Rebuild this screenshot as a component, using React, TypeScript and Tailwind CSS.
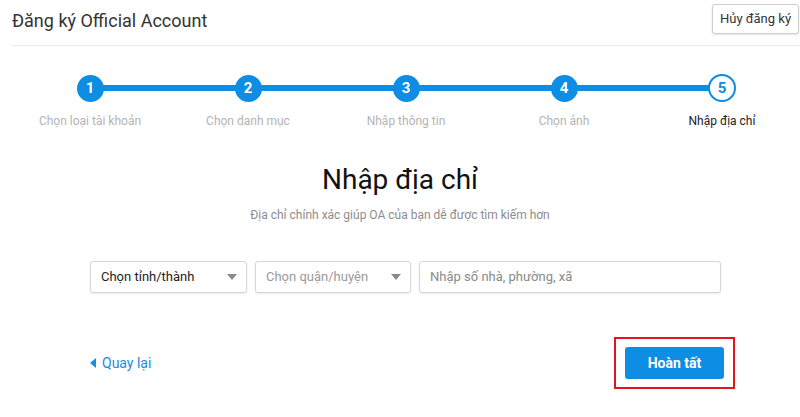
import React from "react";

const steps = [
  "Chọn loại tài khoản",
  "Chọn danh mục",
  "Nhập thông tin",
  "Chọn ảnh",
  "Nhập địa chỉ",
];

function Caret() {
  return (
    <svg width="10" height="6" viewBox="0 0 10 6" className="shrink-0">
      <path d="M0 0 L10 0 L5 6 Z" fill="#8a8a8a" />
    </svg>
  );
}

export default function App() {
  return (
    <div
      className="w-[800px] h-[417px] bg-white overflow-hidden text-[#333]"
      style={{ fontFamily: "Roboto, 'Noto Sans', sans-serif" }}
    >
      {/* Header */}
      <div className="ml-[12px] h-[46px] border-b border-[#e8eaee] flex items-center justify-between">
        <div className="text-[18px] text-[#333] -mt-[4px]">Đăng ký Official Account</div>
        <button className="h-[30px] w-[87px] mr-[1px] -mt-[8px] border border-[#cfcfcf] rounded-[3px] bg-white text-[13px] font-normal text-[#333] shadow-[0_1px_2px_rgba(0,0,0,0.12)]">
          Hủy đăng ký
        </button>
      </div>

      {/* Stepper */}
      <div className="ml-[11px] mt-[28px] w-[790px] grid grid-cols-5">
        {steps.map((s, i) => {
          const last = i === steps.length - 1;
          return (
            <div key={s} className="flex flex-col items-center">
              <div className="relative w-full h-[28px] flex items-center justify-center">
                {i > 0 && (
                  <div className="absolute left-0 right-1/2 top-[11px] h-[6px] bg-[#0d8de3]" />
                )}
                {!last && (
                  <div className="absolute left-1/2 right-0 top-[11px] h-[6px] bg-[#0d8de3]" />
                )}
                {last ? (
                  <div className="relative z-10 w-[28px] h-[28px] rounded-full bg-white border-[2px] border-[#0d8de3] text-[#0d8de3] flex items-center justify-center text-[15px] font-bold">
                    5
                  </div>
                ) : (
                  <div className="relative z-10 w-[27px] h-[27px] rounded-full bg-[#0d8de3] text-white flex items-center justify-center text-[15px] font-bold">
                    {i + 1}
                  </div>
                )}
              </div>
              <div
                className={`mt-[12px] text-[12px] leading-[14px] ${
                  last ? "text-[#222]" : "text-[#b4b4b4]"
                }`}
              >
                {s}
              </div>
            </div>
          );
        })}
      </div>

      {/* Title */}
      <div className="mt-[36px] text-center text-[28px] leading-[32px] text-[#111]">
        Nhập địa chỉ
      </div>
      <div className="mt-[12px] text-center text-[12px] leading-[14px] text-[#8c8c8c]">
        Địa chỉ chính xác giúp OA của bạn dễ được tìm kiếm hơn
      </div>

      {/* Inputs */}
      <div className="mt-[39px] ml-[90px] flex gap-[8px]">
        <div className="w-[157px] h-[32px] border border-[#d6d6d6] rounded-[3px] flex items-center justify-between pl-[10px] pr-[9px] shadow-[0_1px_2px_rgba(0,0,0,0.08)]">
          <span className="text-[13px] text-[#222]">Chọn tỉnh/thành</span>
          <Caret />
        </div>
        <div className="w-[156px] h-[32px] border border-[#d6d6d6] rounded-[3px] flex items-center justify-between pl-[10px] pr-[9px] shadow-[0_1px_2px_rgba(0,0,0,0.08)]">
          <span className="text-[13px] text-[#9a9a9a]">Chọn quận/huyện</span>
          <Caret />
        </div>
        <div className="w-[302px] h-[32px] border border-[#d6d6d6] rounded-[3px] flex items-center pl-[10px] shadow-[0_1px_2px_rgba(0,0,0,0.08)]">
          <span className="text-[13px] text-[#8a8a8a]">Nhập số nhà, phường, xã</span>
        </div>
      </div>

      {/* Bottom */}
      <div className="mt-[44px] ml-[90px] w-[645px] flex items-center justify-between">
        <div className="flex items-center gap-[6px] text-[#1a8be0] text-[14px]">
          <svg width="6" height="10" viewBox="0 0 6 10">
            <path d="M6 0 L6 10 L0 5 Z" fill="#1a8be0" />
          </svg>
          <span>Quay lại</span>
        </div>
        <div className="border-2 border-[#e3161b] px-[9px] py-[8px]">
          <button className="w-[99px] h-[32px] rounded-[3px] bg-[#0d8de3] text-white text-[14px] font-bold">
            Hoàn tất
          </button>
        </div>
      </div>
    </div>
  );
}
